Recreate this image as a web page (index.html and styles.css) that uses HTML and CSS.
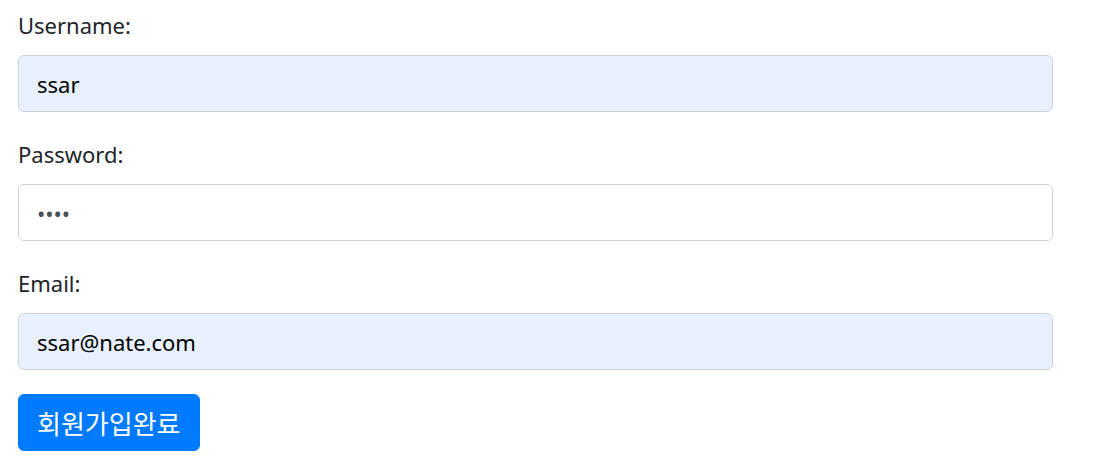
FILE: index.html
```html
<!DOCTYPE html>
<html lang="ko">
<head>
<meta charset="utf-8">
<title>Join</title>
<link rel="stylesheet" href="styles.css">
</head>
<body>
<form class="form">
  <div class="form-group">
    <label class="label" for="username">Username:</label>
    <input class="input input-filled" id="username" type="text" value="ssar">
  </div>
  <div class="form-group">
    <label class="label" for="password">Password:</label>
    <input class="input" id="password" type="password" value="1234">
  </div>
  <div class="form-group">
    <label class="label" for="email">Email:</label>
    <input class="input input-filled" id="email" type="email" value="ssar@nate.com">
  </div>
  <button class="btn" type="button">회원가입완료</button>
</form>
</body>
</html>
```
FILE: styles.css
```css
html, body {
  margin: 0;
  padding: 0;
  background: #fff;
}
body {
  font-family: "Noto Sans", "Noto Sans CJK KR", sans-serif;
  font-size: 22px;
  line-height: 36px;
  color: #212529;
}
.form {
  width: 1035px;
  padding: 7px 0 0 18px;
  display: flex;
  flex-direction: column;
  align-items: flex-start;
}
.form-group {
  width: 100%;
  display: flex;
  flex-direction: column;
  margin-bottom: 24px;
}
.label {
  display: block;
  margin-bottom: 12px;
  height: 36px;
}
.input {
  box-sizing: border-box;
  width: 100%;
  height: 57px;
  padding: 9px 18px;
  font-family: inherit;
  font-size: 22px;
  line-height: 36px;
  color: #495057;
  background: #fff;
  border: 1px solid #ced4da;
  border-radius: 6px;
  outline: none;
  margin: 0;
}
.input-filled {
  background: #e8f0fe;
  color: #000;
}
.btn {
  box-sizing: border-box;
  height: 57px;
  padding: 9px 18px;
  font-family: "Noto Sans CJK KR", sans-serif;
  font-size: 26px;
  letter-spacing: 0;
  line-height: 36px;
  color: #fff;
  background: #007bff;
  border: 1px solid #007bff;
  border-radius: 6px;
  cursor: pointer;
}
```
